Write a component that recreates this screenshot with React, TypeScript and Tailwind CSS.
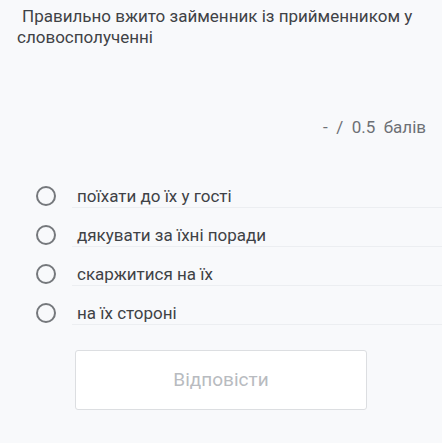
import React from "react"

const options = [
  "поїхати до їх у гості",
  "дякувати за їхні поради",
  "скаржитися на їх",
  "на їх стороні",
]

export default function App() {
  return (
    <div className="min-h-[443px] w-full bg-[#f8f9fb] font-['Roboto',sans-serif] overflow-hidden">
      <div className="pl-[17px] pt-[6px] text-[17px] leading-[21px] text-[#3f4246]">
        <div className="pl-[5px] whitespace-nowrap">Правильно вжито займенник із прийменником у</div>
        <div>словосполученні</div>
      </div>

      <div className="mt-[69px] pr-[16px] flex justify-end text-[17px] leading-[20px] text-[#6d7075] whitespace-pre">
        {"-  /  0.5  балів"}
      </div>

      <div className="mt-[32px]">
        {options.map((o) => (
          <div key={o} className="flex items-start">
            <div className="ml-[36px] mt-[17px] h-[20px] w-[20px] shrink-0 rounded-full border-[2.5px] border-[#75787c]" />
            <div className="ml-[16px] flex-1 border-b border-[#eceef1] pl-[5px] pt-[17px] pb-[1px] text-[17px] leading-[20px] text-[#3f4246]">
              {o}
            </div>
          </div>
        ))}
      </div>

      <div className="mx-[75px] mt-[25px] flex h-[60px] items-center justify-center rounded-[3px] border border-[#dcdee1] bg-white text-[19px] text-[#b8bbc0]">
        Відповісти
      </div>
    </div>
  )
}
